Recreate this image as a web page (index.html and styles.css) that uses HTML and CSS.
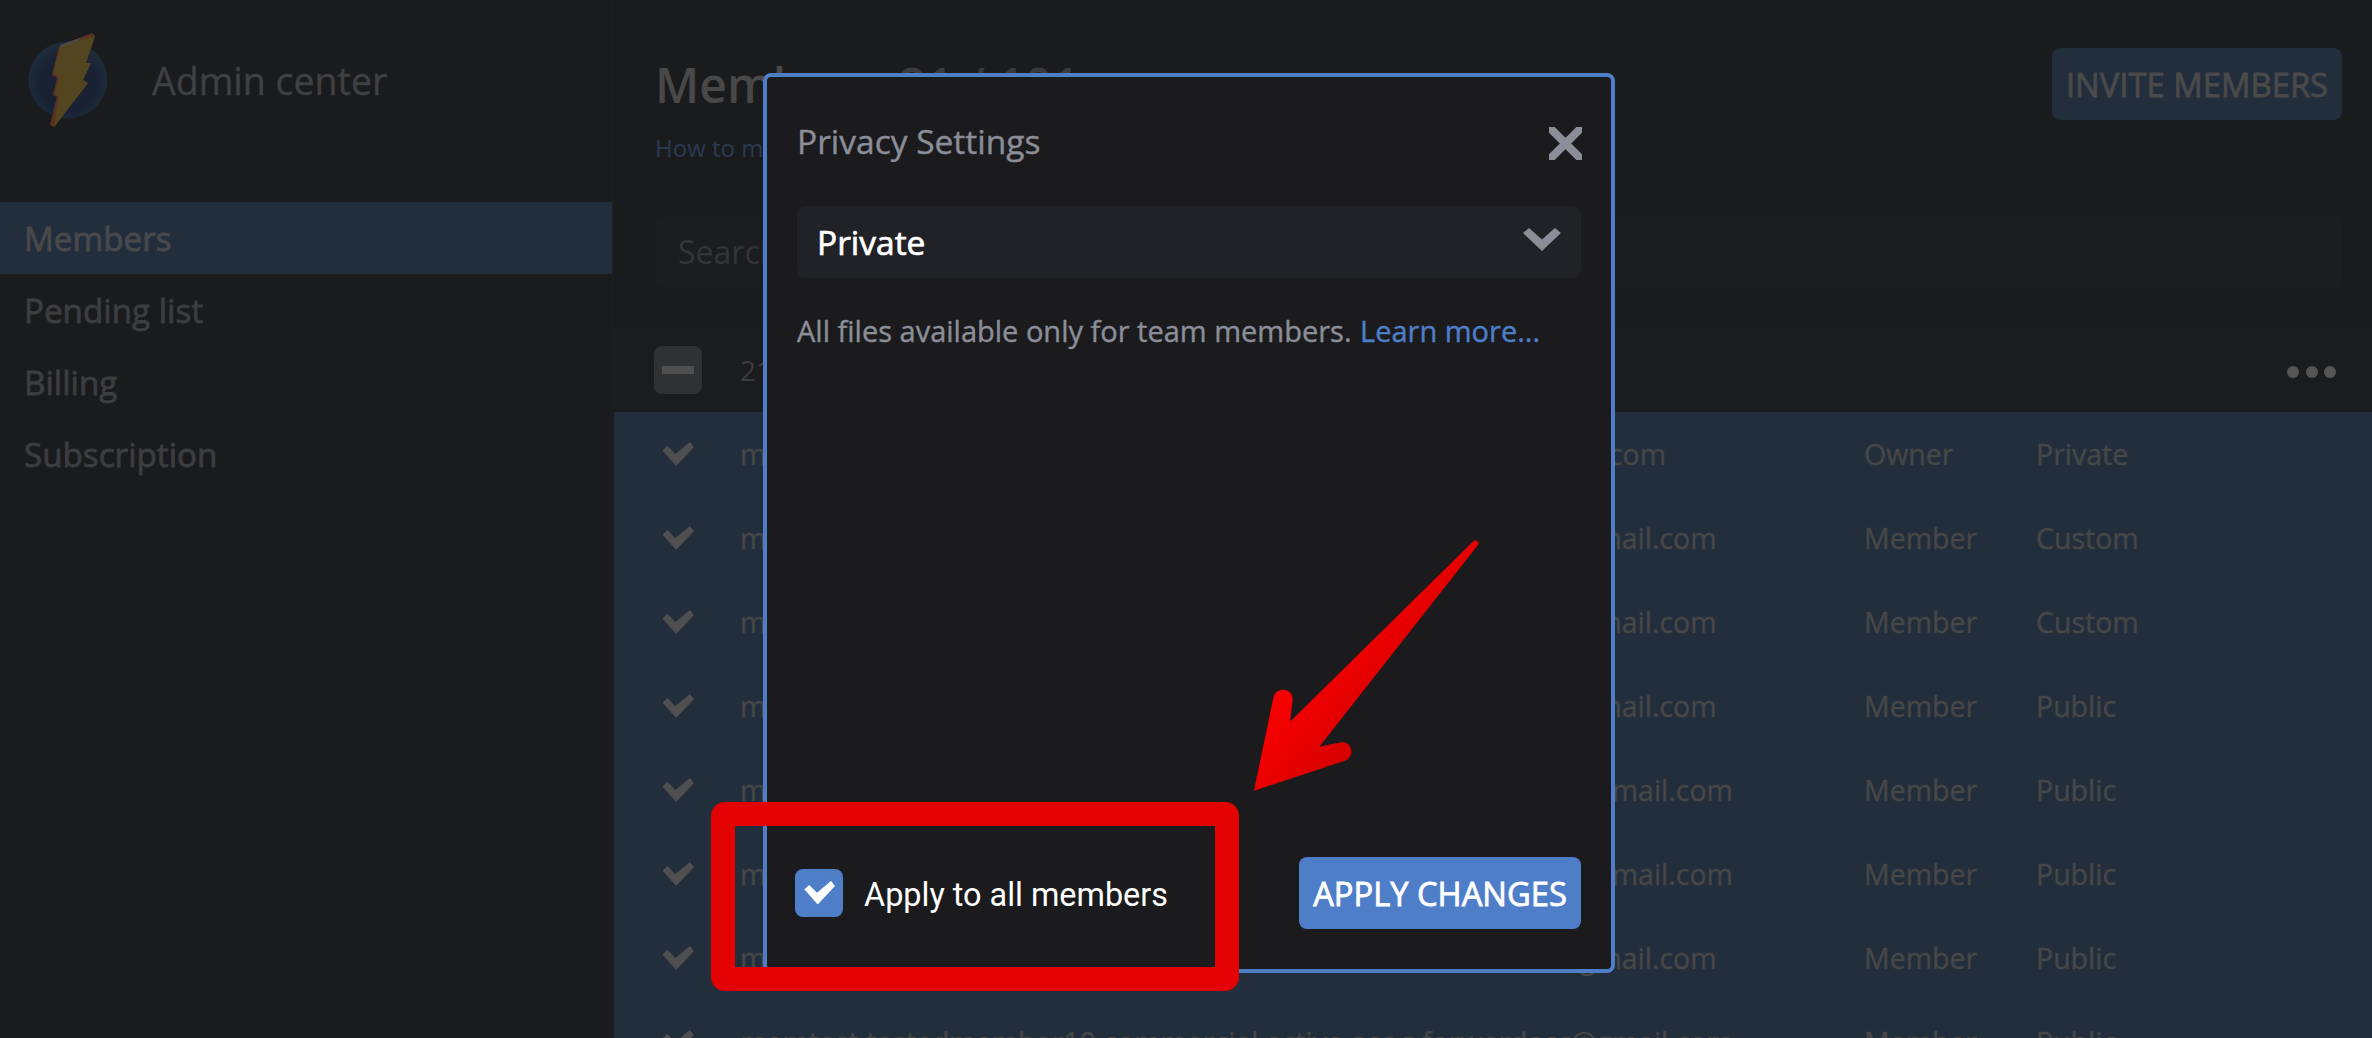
FILE: index.html
```html
<!DOCTYPE html>
<html lang="en">
<head>
<meta charset="utf-8">
<title>Admin center</title>
<link rel="stylesheet" href="styles.css">
</head>
<body>
<svg class="defs" width="0" height="0" aria-hidden="true">
  <symbol id="check" viewBox="8 12 31 23.4"><polygon points="8.3,20.3 13.3,16 21,23.7 35,12 39,17 21.7,35.4"/></symbol>
</svg>
<div class="app">
  <aside class="sidebar">
    <div class="brand">
      <svg class="logo" width="152" height="160" viewBox="0 0 152 160">
        <defs>
          <radialGradient id="globe" cx="0.5" cy="0.55" r="0.55">
            <stop offset="0" stop-color="#191f30"/>
            <stop offset="0.65" stop-color="#192234"/>
            <stop offset="1" stop-color="#1e2e3c"/>
          </radialGradient>
        </defs>
        <ellipse cx="67.8" cy="80" rx="39.5" ry="38.5" fill="url(#globe)"/>
        <polygon points="59,46 92,33 95,36 86,63 91,63 83,80 88,83 54,127 50,125 57,97 53,95 57,78 52,75" fill="#5a3320"/>
        <polygon points="61,46 95,36 86,63 91,63 83,80 88,83 54,127 59,96 55,95 59,77 53,73" fill="#524520"/>
        <polygon points="60,45 80,38 78,41 61,47" fill="#4c4c48"/>
      </svg>
      <span class="brand-name">Admin center</span>
    </div>
    <nav class="nav">
      <a class="nav-item nav-item-active">Members</a>
      <a class="nav-item">Pending list</a>
      <a class="nav-item">Billing</a>
      <a class="nav-item">Subscription</a>
    </nav>
  </aside>
  <main class="main">
    <div class="top">
      <div class="heading">
        <h1 class="title">Members <span class="count">21 / 101</span></h1>
        <a class="howto">How to manage members</a>
      </div>
      <button class="btn-invite">INVITE MEMBERS</button>
    </div>
    <div class="search">Search</div>
    <div class="bulk">
      <span class="minus-box"><span class="minus"></span></span>
      <span class="bulk-text">21 selected</span>
      <span class="dots"><i></i><i></i><i></i></span>
    </div>
    <div class="rows">
      <div class="row"><svg class="tick"><use href="#check"/></svg><span>memtest.testadmember1.commercial.active.s.forwardacc@gmail.com</span><span>Owner</span><span>Private</span></div>
      <div class="row"><svg class="tick"><use href="#check"/></svg><span>memtest.testadmember2.commercial.active.acc.s.forwardacc@gmail.com</span><span>Member</span><span>Custom</span></div>
      <div class="row"><svg class="tick"><use href="#check"/></svg><span>memtest.testadmember3.commercial.active.acc.s.forwardacc@gmail.com</span><span>Member</span><span>Custom</span></div>
      <div class="row"><svg class="tick"><use href="#check"/></svg><span>memtest.testadmember4.commercial.active.acc.s.forwardacc@gmail.com</span><span>Member</span><span>Public</span></div>
      <div class="row"><svg class="tick"><use href="#check"/></svg><span>memtest.testadmember12.commercial.active.acc.s.forwardacc@gmail.com</span><span>Member</span><span>Public</span></div>
      <div class="row"><svg class="tick"><use href="#check"/></svg><span>memtest.testadmember13.commercial.active.acc.s.forwardacc@gmail.com</span><span>Member</span><span>Public</span></div>
      <div class="row"><svg class="tick"><use href="#check"/></svg><span>memtest.testadmember7.commercial.active.acc.s.forwardacc@gmail.com</span><span>Member</span><span>Public</span></div>
      <div class="row"><svg class="tick"><use href="#check"/></svg><span>memtest.testadmember10.commercial.active.acc.s.forwardacc@gmail.com</span><span>Member</span><span>Public</span></div>
    </div>
  </main>
</div>

<section class="modal">
  <header class="modal-head">
    <h2 class="modal-title">Privacy Settings</h2>
    <svg class="close" width="33" height="33" viewBox="0 0 33 33"><path d="M2.5 2.5 30.5 30.5M30.5 2.5 2.5 30.5"/></svg>
  </header>
  <div class="select">
    <span>Private</span>
    <svg class="chevron" width="38" height="23" viewBox="0 0 38 23"><polygon points="0,5 6,0 19,11.5 32,0 38,5 19,23"/></svg>
  </div>
  <p class="desc">All files available only for team members. <a class="learn">Learn more...</a></p>
  <footer class="modal-foot">
    <label class="apply">
      <span class="apply-box"><svg class="apply-tick"><use href="#check"/></svg></span>
      <span class="apply-label">Apply to all members</span>
    </label>
    <button class="btn-apply">APPLY CHANGES</button>
  </footer>
</section>

<div class="callout"></div>
<svg class="arrow" width="260" height="270" viewBox="0 0 260 270">
  <defs>
    <linearGradient id="arrowfill" x1="0.32" y1="0.5" x2="0.56" y2="0.72">
      <stop offset="0" stop-color="#f40000"/>
      <stop offset="1" stop-color="#d60000"/>
    </linearGradient>
  </defs>
  <path fill="url(#arrowfill)" d="M24 260.7 43.5 167C46.500 156 63.500 158 62.700 170L60 191.700 243 11.500C246 9 250 12 248 15L89.300 216.700 110 212.500C122 210 126 226 115 230.700Z"/>
</svg>
</body>
</html>
```
FILE: styles.css
```css
* { box-sizing: border-box; }
html, body { margin: 0; height: 100%; }
body {
  background: #1a1b1d;
  font-family: "Open Sans", "Liberation Sans", sans-serif;
  overflow: hidden;
  color: #444;
}
.defs { position: absolute; }
.app { display: flex; height: 1038px; }

.sidebar { width: 612px; flex: none; }
.brand { display: flex; align-items: center; height: 160px; margin-bottom: 42px; }
.logo { flex: none; display: block; }
.brand-name { font-size: 37.500px; -webkit-text-stroke: 0.4px; color: #3f4042; }
.nav { display: flex; flex-direction: column; }
.nav-item {
  height: 72px;
  display: flex;
  align-items: center;
  padding-left: 24px;
  font-size: 33.200px;
  -webkit-text-stroke: 0.8px;
  color: #3c3d3f;
}
.nav-item-active { background: #232e3c; color: #48494b; }

.main {
  flex: 1;
  min-width: 0;
  border-left: 1px solid #1d1e20;
  padding-left: 1px;
  display: flex;
  flex-direction: column;
}
.top {
  display: flex;
  justify-content: space-between;
  align-items: flex-start;
  padding: 48px 30px 0 41px;
  height: 216px;
}
.title {
  margin: 0;
  font-size: 48px;
  font-weight: 600;
  line-height: 74px;
  color: #484848;
}
.count { color: #3a3a3c; margin-left: 12px; }
.howto { display: block; font-size: 24px; line-height: 34px; margin-top: 9px; color: #2a3a52; }
.btn-invite {
  width: 290px;
  height: 72px;
  border: 0;
  border-radius: 8px;
  background: #232e3c;
  color: #4a4a4a;
  font: 400 32.800px "Open Sans", sans-serif;
  -webkit-text-stroke: 0.8px;
  padding: 0;
}
.search {
  margin: 0 30px 0 41px;
  height: 72px;
  border-radius: 8px;
  background: #1c1d1f;
  padding-left: 23px;
  font-size: 32px;
  line-height: 72px;
  color: #343537;
}
.bulk {
  margin-top: 40px;
  height: 84px;
  display: flex;
  align-items: center;
  padding: 0 36px 0 40px;
  background: #1b1c1d;
}
.minus-box {
  width: 48px;
  height: 48px;
  border-radius: 8px;
  background: #303133;
  display: flex;
  align-items: center;
  justify-content: center;
}
.minus { width: 32px; height: 8px; background: #4f4f4f; }
.bulk-text { margin-left: 38px; font-size: 28px; color: #3a3b3d; }
.dots { margin-left: auto; display: flex; gap: 6.500px; padding-top: 4px; }
.dots i { width: 12px; height: 12px; border-radius: 50%; background: #555; }
.rows { background: #232e3c; flex: 1; overflow: hidden; }
.row {
  height: 84px;
  display: grid;
  grid-template-columns: 126px 1124px 172px 1fr;
  align-items: center;
  font-size: 28.500px;
  -webkit-text-stroke: 0.4px;
  color: #464747;
  white-space: nowrap;
}
.tick { width: 32px; height: 24px; margin-left: 48px; fill: #4f4f4f; }

.modal {
  position: absolute;
  left: 763px;
  top: 73px;
  width: 852px;
  height: 900px;
  background: #1b1b1d;
  border: 4px solid #4f7ec9;
  border-radius: 8px;
  padding: 0 30px 40px;
  display: flex;
  flex-direction: column;
}
.modal-head {
  display: flex;
  justify-content: space-between;
  align-items: center;
  height: 129px;
  padding-bottom: 1px;
  flex: none;
}
.modal-title { margin: 0; font-size: 33.500px; font-weight: 400; -webkit-text-stroke: 0.4px; color: #8b8e98; }
.close { fill: none; stroke: #8b8e98; stroke-width: 8; stroke-linecap: square; overflow: hidden; margin: 4px -1px 0 0; }
.select {
  height: 72px;
  flex: none;
  border-radius: 8px;
  background: #212226;
  display: flex;
  align-items: center;
  justify-content: space-between;
  padding: 0 20px 0 20px;
  color: #fff;
  font-size: 33.500px;
  -webkit-text-stroke: 0.7px;
}
.chevron { fill: #8b8e98; margin-top: -6px; }
.desc { margin: 34px 0 0; font-size: 29px; -webkit-text-stroke: 0.4px; line-height: 38px; color: #8b8e98; }
.learn { color: #4f7ec9; margin-left: 1px; }
.modal-foot { margin-top: auto; display: flex; justify-content: space-between; align-items: center; }
.apply { display: flex; align-items: center; margin-left: -2px; }
.apply-box {
  width: 48px;
  height: 48px;
  border-radius: 8px;
  background: #4f7ec9;
  display: flex;
  align-items: center;
  justify-content: center;
}
.apply-tick { width: 31px; height: 23.400px; fill: #fff; }
.apply-label { margin: 4px 0 0 21px; font: 400 32.400px Roboto, sans-serif; color: #fff; }
.btn-apply {
  width: 282px;
  height: 72px;
  border: 0;
  border-radius: 8px;
  background: #4f7ec9;
  color: #fff;
  font: 400 32.700px "Open Sans", sans-serif;
  -webkit-text-stroke: 0.8px;
  padding: 0;
}

.callout {
  position: absolute;
  left: 711px;
  top: 802px;
  width: 528px;
  height: 189px;
  border: 24px solid #e30202;
  border-radius: 14px;
}
.arrow { position: absolute; left: 1230px; top: 530px; }
```
